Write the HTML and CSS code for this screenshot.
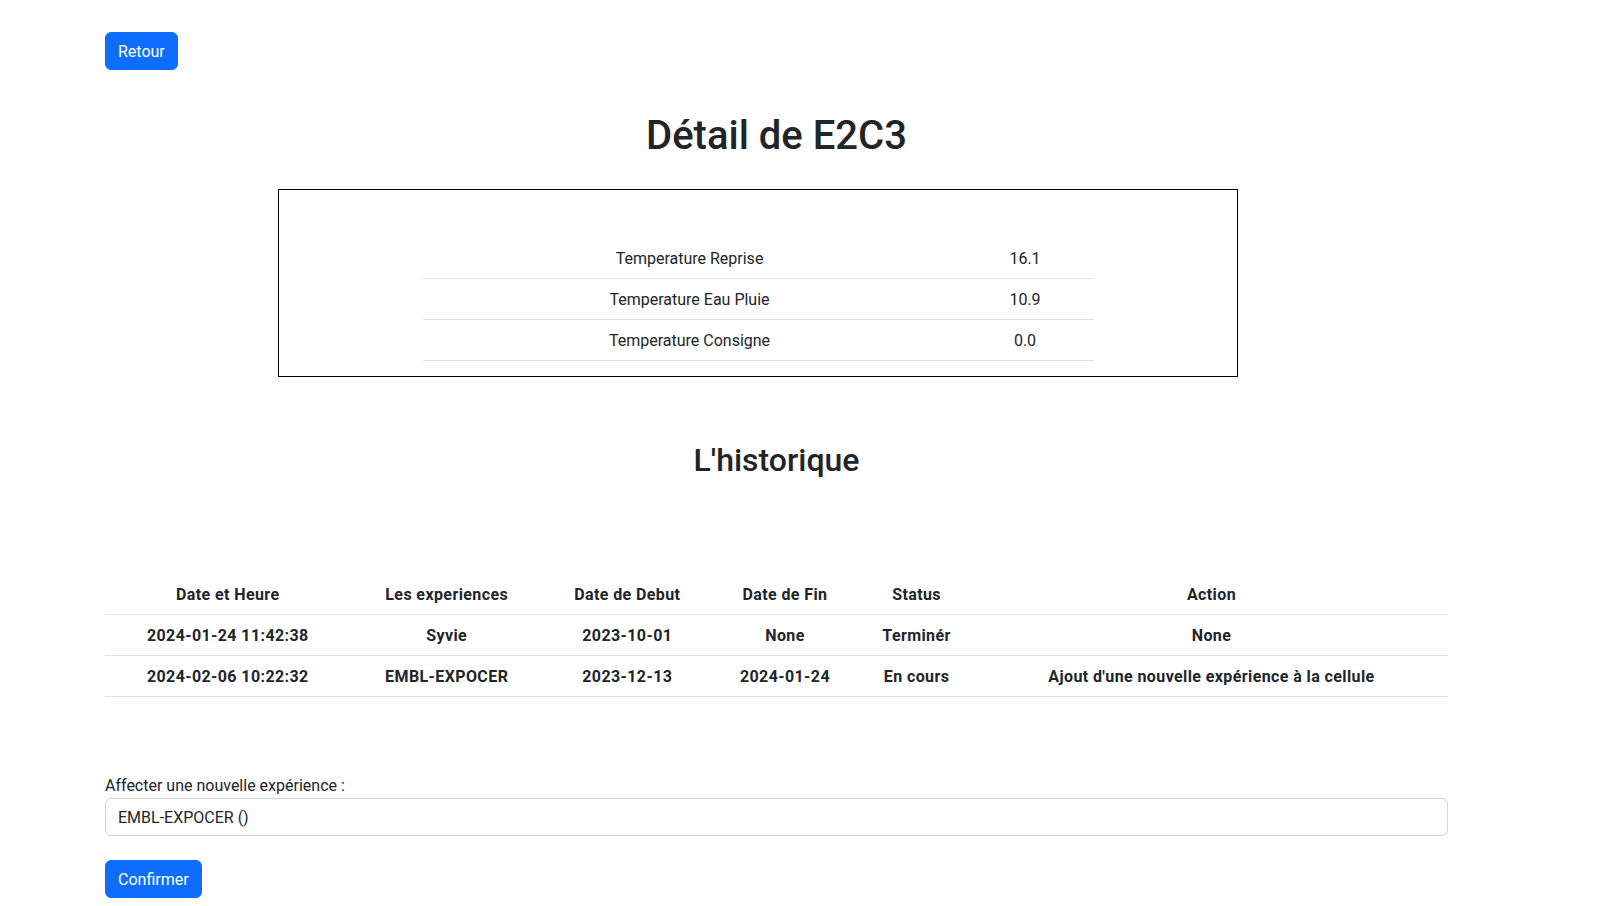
FILE: index.html
```html
<!DOCTYPE html>
<html lang="fr">
<head>
<meta charset="utf-8">
<title>Détail de E2C3</title>
<link rel="stylesheet" href="styles.css">
</head>
<body>
<div class="page">
  <div class="top-bar">
    <button class="btn btn-primary">Retour</button>
  </div>
  <h1 class="title">Détail de E2C3</h1>
  <div class="detail-box">
    <table class="mini-table">
      <tbody>
        <tr><td class="mini-label">Temperature Reprise</td><td class="mini-value">16.1</td></tr>
        <tr><td class="mini-label">Temperature Eau Pluie</td><td class="mini-value">10.9</td></tr>
        <tr><td class="mini-label">Temperature Consigne</td><td class="mini-value">0.0</td></tr>
      </tbody>
    </table>
  </div>
  <h2 class="subtitle">L'historique</h2>
  <table class="history">
    <thead>
      <tr>
        <th>Date et Heure</th>
        <th>Les experiences</th>
        <th>Date de Debut</th>
        <th>Date de Fin</th>
        <th>Status</th>
        <th>Action</th>
      </tr>
    </thead>
    <tbody>
      <tr>
        <td>2024-01-24 11:42:38</td>
        <td>Syvie</td>
        <td>2023-10-01</td>
        <td>None</td>
        <td>Terminér</td>
        <td>None</td>
      </tr>
      <tr>
        <td>2024-02-06 10:22:32</td>
        <td>EMBL-EXPOCER</td>
        <td>2023-12-13</td>
        <td>2024-01-24</td>
        <td>En cours</td>
        <td>Ajout d'une nouvelle expérience à la cellule</td>
      </tr>
    </tbody>
  </table>
  <form class="assign-form">
    <label class="form-label" for="exp">Affecter une nouvelle expérience :</label>
    <div class="form-control" id="exp">EMBL-EXPOCER ()</div>
    <div class="form-actions">
      <button type="button" class="btn btn-primary">Confirmer</button>
    </div>
  </form>
</div>
</body>
</html>
```

FILE: styles.css
```css
* {
  box-sizing: border-box;
}

html, body {
  margin: 0;
  padding: 0;
  background: #fff;
}

body {
  font-family: Roboto, "Liberation Sans", sans-serif;
  font-size: 16px;
  line-height: 24px;
  color: #212529;
}

.page {
  width: 1448px;
  padding-left: 105px;
}

.top-bar {
  padding-top: 32px;
  display: flex;
}

.btn {
  font-family: inherit;
  font-size: 16px;
  line-height: 24px;
  padding: 7px 12px 5px;
  border: 1px solid transparent;
  border-radius: 6px;
  cursor: pointer;
}

.btn-primary {
  background: #0d6efd;
  border-color: #0d6efd;
  color: #fff;
}

.title {
  margin: 42px 0 0;
  font-size: 40px;
  line-height: 48px;
  font-weight: 500;
  text-align: center;
}

.detail-box {
  margin: 29px 0 0 173px;
  width: 960px;
  height: 188px;
  border: 1px solid #000;
  padding-top: 48px;
  display: flex;
  justify-content: center;
}

.mini-table {
  width: 671px;
  border-collapse: collapse;
  align-self: flex-start;
}

.mini-table td {
  padding: 9px 8px 7px;
  text-align: center;
  border-bottom: 1px solid #dee2e6;
}

.mini-label {
  width: 534px;
}

.subtitle {
  margin: 64px 0 0;
  font-size: 32px;
  line-height: 38px;
  font-weight: 500;
  text-align: center;
}

.history {
  margin-top: 95px;
  width: 100%;
  border-collapse: collapse;
}

.history th,
.history td {
  padding: 9px 8px 7px;
  text-align: center;
  font-weight: 700;
  letter-spacing: 0.4px;
  border-bottom: 1px solid #dee2e6;
  white-space: nowrap;
}

.assign-form {
  margin-top: 77px;
  display: flex;
  flex-direction: column;
}

.form-label {
  display: block;
}

.form-control {
  height: 38px;
  padding: 7px 12px 5px;
  border: 1px solid #ced4da;
  border-radius: 6px;
  background: #fff;
}

.form-actions {
  margin-top: 24px;
  display: flex;
}
```
